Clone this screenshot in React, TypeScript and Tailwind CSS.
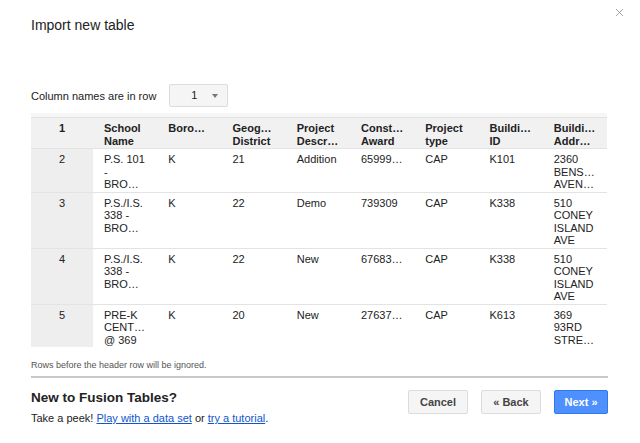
import { X } from "lucide-react";

const HEADERS = [
    ["School", "Name"],
    ["Boro…"],
    ["Geog…", "District"],
    ["Project", "Descr…"],
    ["Const…", "Award"],
    ["Project", "type"],
    ["Buildi…", "ID"],
    ["Buildi…", "Addr…"],
];

const ROWS = [
    {
        n: "2",
        cells: [["P.S. 101", "-", "BRO…"], ["K"], ["21"], ["Addition"], ["65999…"], ["CAP"], ["K101"], ["2360", "BENS…", "AVEN…"]],
    },
    {
        n: "3",
        cells: [["P.S./I.S.", "338 -", "BRO…"], ["K"], ["22"], ["Demo"], ["739309"], ["CAP"], ["K338"], ["510", "CONEY", "ISLAND", "AVE"]],
    },
    {
        n: "4",
        cells: [["P.S./I.S.", "338 -", "BRO…"], ["K"], ["22"], ["New"], ["67683…"], ["CAP"], ["K338"], ["510", "CONEY", "ISLAND", "AVE"]],
    },
    {
        n: "5",
        cells: [["PRE-K", "CENT…", "@ 369"], ["K"], ["20"], ["New"], ["27637…"], ["CAP"], ["K613"], ["369", "93RD", "STRE…"]],
    },
];

function Lines({ lines }: { lines: string[] }) {
    return (
        <>
            {lines.map((l, i) => (
                <div key={i} className="whitespace-nowrap">
                    {l}
                </div>
            ))}
        </>
    );
}

export default function App() {
    return (
        <div
            className="relative w-[640px] h-[443px] bg-white text-[#222] overflow-hidden pl-[31px] pr-[33px]"
            style={{ fontFamily: '"Liberation Sans", Arial, sans-serif' }}
        >
            {/* Close */}
            <X className="absolute top-[6px] right-[14px] w-[13px] h-[13px] text-[#a0a0a0]" strokeWidth={1.75} />

            <h1 className="pt-[16px] text-[14px] leading-[18px] text-[#222]">Import new table</h1>

            {/* Header row selector */}
            <div className="mt-[50px] flex items-center gap-[13px]">
                <span className="text-[11px] leading-[14px]">Column names are in row</span>
                <div className="w-[59px] h-[23px] flex items-center justify-between pl-[21px] pr-[9px] bg-[#f5f5f5] border border-[#dcdcdc] rounded-[2px] text-[11px]">
                    <span>1</span>
                    <span className="w-0 h-0 border-l-[3px] border-r-[3px] border-t-[4px] border-l-transparent border-r-transparent border-t-[#777]" />
                </div>
            </div>

            {/* Table preview */}
            <div className="mt-[6px] w-[576px] text-[11px] leading-[12.5px] text-[#222]">
                <div className="h-[5px] bg-[#f6f6f6] border-b border-[#e3e3e3]" />
                <div className="grid grid-cols-[62px_repeat(8,1fr)] bg-[#f1f1f1] border-b border-[#e3e3e3] font-bold">
                    <div className="h-[30px] pt-[4px] text-center">1</div>
                    {HEADERS.map((h, i) => (
                        <div key={i} className="pt-[4px] pl-[11px]">
                            <Lines lines={h} />
                        </div>
                    ))}
                </div>
                {ROWS.map((r, ri) => (
                    <div
                        key={r.n}
                        className={`grid grid-cols-[62px_repeat(8,1fr)] ${ri < ROWS.length - 1 ? "border-b border-[#e3e3e3]" : ""}`}
                    >
                        <div className="bg-[#eeeeee] pt-[4px] text-center">{r.n}</div>
                        {r.cells.map((c, i) => (
                            <div key={i} className="pt-[4px] pb-[1px] pl-[11px]">
                                <Lines lines={c} />
                            </div>
                        ))}
                    </div>
                ))}
            </div>

            <p className="mt-[12px] text-[9px] leading-[12px] text-[#555]">Rows before the header row will be ignored.</p>

            <div className="mt-[5px] w-[577px] border-t-2 border-[#c8c8c8]" />

            {/* Footer */}
            <div className="w-[577px] flex justify-between">
                <div>
                    <h2 className="mt-[11px] text-[13.5px] leading-[18px] font-bold">New to Fusion Tables?</h2>
                    <p className="mt-[4px] text-[11px] leading-[15px]">
                        Take a peek!{" "}
                        <a className="text-[#1155cc] underline">Play with a data set</a> or{" "}
                        <a className="text-[#1155cc] underline">try a tutorial</a>.
                    </p>
                </div>
                <div className="mt-[12px] flex gap-[13px]">
                    <button className="w-[60px] h-[24px] bg-[#f5f5f5] border border-[#dcdcdc] rounded-[2px] text-[11px] font-bold text-[#444]">
                        Cancel
                    </button>
                    <button className="w-[60px] h-[24px] bg-[#f5f5f5] border border-[#dcdcdc] rounded-[2px] text-[11px] font-bold text-[#444]">
                        « Back
                    </button>
                    <button className="w-[54px] h-[24px] bg-[#4d90fe] border border-[#3079ed] rounded-[2px] text-[11px] font-bold text-white">
                        Next »
                    </button>
                </div>
            </div>
        </div>
    );
}
